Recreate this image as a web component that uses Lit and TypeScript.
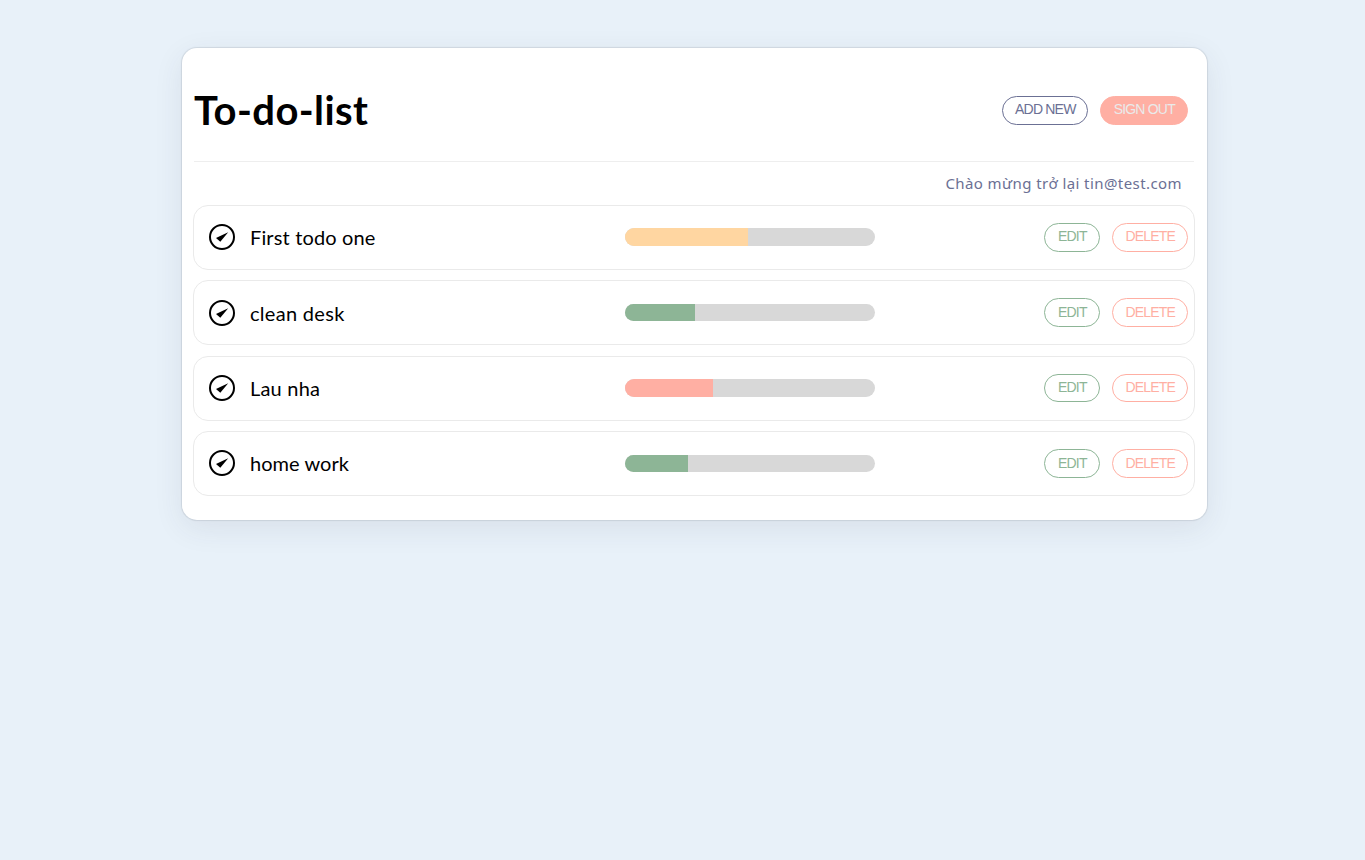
import { LitElement, html, css } from "lit";
import { customElement, property } from "lit/decorators.js";

interface Task {
  title: string;
  progress: number;
  color: string;
  spacing: string;
}

const TASKS: Task[] = [
  { title: "First todo one", progress: 49.2, color: "rgb(255, 214, 161)", spacing: "0.15px" },
  { title: "clean desk", progress: 28, color: "rgb(141, 181, 150)", spacing: "0.3px" },
  { title: "Lau nha", progress: 35.2, color: "rgb(255, 175, 163)", spacing: "0.2px" },
  { title: "home work", progress: 25.2, color: "rgb(141, 181, 150)", spacing: "0.05px" },
];

const buttonStyles = css`
  button {
    box-sizing: border-box;
    height: 28.8px;
    margin: 0;
    padding: 0 0 1.4px;
    border: 1px solid currentColor;
    border-radius: 15px;
    background: #fff;
    font: 14px/16px "Liberation Sans", Arial, sans-serif;
    letter-spacing: -0.8px;
    text-indent: 0.6px;
    white-space: nowrap;
  }
`;

@customElement("task-row")
class TaskRow extends LitElement {
  @property({ attribute: false }) task!: Task;

  static styles = [
    buttonStyles,
    css`
      :host {
        display: flex;
        box-sizing: border-box;
        align-items: center;
        height: 65px;
        padding: 0 6px 0.7px 15px;
        border: 1px solid #eaeaea;
        border-radius: 15px;
      }
      .tick {
        flex: none;
        width: 26px;
        height: 26px;
        margin-right: 15px;
      }
      .title {
        width: 375px;
        font-size: 20px;
        line-height: 24px;
        color: #000;
      }
      .track {
        width: 250px;
        height: 17.6px;
        border-radius: 9px;
        overflow: hidden;
        background: #d8d8d8;
      }
      .fill {
        height: 100%;
      }
      .actions {
        display: flex;
        gap: 12px;
        margin-left: auto;
      }
      .edit {
        width: 56px;
        color: #8db596;
      }
      .delete {
        width: 76px;
        color: #ffafa3;
      }
    `,
  ];

  render() {
    const { title, progress, color, spacing } = this.task;
    return html`
      <svg class="tick" viewBox="0 0 26 26">
        <circle cx="13" cy="13" r="12" fill="none" stroke="#000" stroke-width="2" />
        <path d="M19.2 8.2 11.3 17.8 7 14 9.6 12.7Z" />
      </svg>
      <span class="title" style="letter-spacing:${spacing}">${title}</span>
      <div class="track"><div class="fill" style="width:${progress}%;background:${color}"></div></div>
      <div class="actions">
        <button class="edit">EDIT</button>
        <button class="delete">DELETE</button>
      </div>
    `;
  }
}

@customElement("app-root")
class AppRoot extends LitElement {
  static styles = [
    buttonStyles,
    css`
      :host {
        display: block;
        box-sizing: border-box;
        min-height: 860px;
        padding: 48px 0 0 182px;
        background: #e8f1f9;
        font-family: "Trebuchet MS", Lato, "Noto Sans", sans-serif;
      }
      .card {
        box-sizing: border-box;
        width: 1025px;
        height: 472px;
        padding: 0 12px 0 11px;
        border-radius: 15px;
        background: #fff;
        box-shadow: rgba(50, 60, 80, 0.09) 0 8px 30px 0, rgba(20, 30, 50, 0.1) 0 0 1px 1px;
      }
      header {
        display: flex;
        box-sizing: border-box;
        align-items: center;
        height: 114px;
        margin: 0 1px;
        padding: 12px 6px 0 0;
        border-bottom: 1px solid #eee;
      }
      h1 {
        margin: 0 auto 0 0;
        padding-bottom: 1px;
        font-size: 40px;
        line-height: 48px;
        letter-spacing: 0.4px;
        color: #000;
      }
      header button {
        padding-bottom: 3px;
      }
      .add {
        width: 86px;
        margin-right: 12px;
        color: #6b7094;
      }
      .out {
        width: 88px;
        border-color: #ffafa3;
        background: #ffafa3;
        color: #eaeaea;
      }
      .welcome {
        margin: 0;
        padding: 10px 13px 11px 0;
        text-align: right;
        font-family: "Trebuchet MS", "Noto Sans", sans-serif;
        font-size: 15px;
        line-height: 22px;
        letter-spacing: 0.42px;
        color: #6b7094;
      }
      .list {
        display: grid;
        gap: 10.4px;
      }
    `,
  ];

  render() {
    return html`
      <main class="card">
        <header>
          <h1>To-do-list</h1>
          <button class="add">ADD NEW</button>
          <button class="out">SIGN OUT</button>
        </header>
        <p class="welcome">Chào mừng trở lại tin@test.com</p>
        <section class="list">${TASKS.map((task) => html`<task-row .task=${task}></task-row>`)}</section>
      </main>
    `;
  }
}
